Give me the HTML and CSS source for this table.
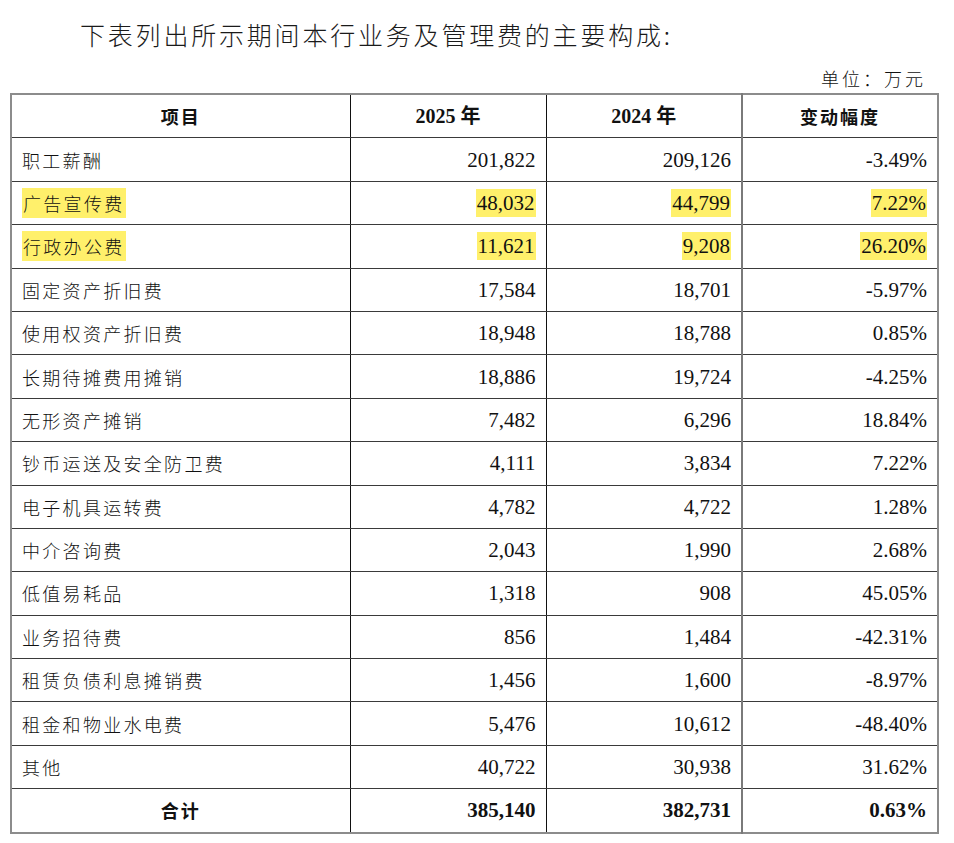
FILE: index.html
```html
<!DOCTYPE html>
<html lang="zh-CN">
<head>
<meta charset="utf-8">
<title>业务及管理费</title>
<link rel="stylesheet" href="styles.css">
</head>
<body>
<p class="title">下表列出所示期间本行业务及管理费的主要构成:</p>
<p class="unit">单位：万元</p>
<table class="fee">
  <colgroup>
    <col class="c1"><col class="c2"><col class="c3"><col class="c4">
  </colgroup>
  <thead>
    <tr><th>项目</th><th>2025 年</th><th class="gray">2024 年</th><th>变动幅度</th></tr>
  </thead>
  <tbody>
    <tr><td class="lbl">职工薪酬</td><td>201,822</td><td class="gray">209,126</td><td>-3.49%</td></tr>
    <tr><td class="lbl"><span class="hl">广告宣传费</span></td><td><span class="hl">48,032</span></td><td class="gray"><span class="hl">44,799</span></td><td><span class="hl">7.22%</span></td></tr>
    <tr><td class="lbl"><span class="hl">行政办公费</span></td><td><span class="hl">11,621</span></td><td class="gray"><span class="hl">9,208</span></td><td><span class="hl">26.20%</span></td></tr>
    <tr><td class="lbl">固定资产折旧费</td><td>17,584</td><td class="gray">18,701</td><td>-5.97%</td></tr>
    <tr><td class="lbl">使用权资产折旧费</td><td>18,948</td><td class="gray">18,788</td><td>0.85%</td></tr>
    <tr><td class="lbl">长期待摊费用摊销</td><td>18,886</td><td class="gray">19,724</td><td>-4.25%</td></tr>
    <tr><td class="lbl">无形资产摊销</td><td>7,482</td><td class="gray">6,296</td><td>18.84%</td></tr>
    <tr><td class="lbl">钞币运送及安全防卫费</td><td>4,111</td><td class="gray">3,834</td><td>7.22%</td></tr>
    <tr><td class="lbl">电子机具运转费</td><td>4,782</td><td class="gray">4,722</td><td>1.28%</td></tr>
    <tr><td class="lbl">中介咨询费</td><td>2,043</td><td class="gray">1,990</td><td>2.68%</td></tr>
    <tr><td class="lbl">低值易耗品</td><td>1,318</td><td class="gray">908</td><td>45.05%</td></tr>
    <tr><td class="lbl">业务招待费</td><td>856</td><td class="gray">1,484</td><td>-42.31%</td></tr>
    <tr><td class="lbl">租赁负债利息摊销费</td><td>1,456</td><td class="gray">1,600</td><td>-8.97%</td></tr>
    <tr><td class="lbl">租金和物业水电费</td><td>5,476</td><td class="gray">10,612</td><td>-48.40%</td></tr>
    <tr><td class="lbl">其他</td><td>40,722</td><td class="gray">30,938</td><td>31.62%</td></tr>
  </tbody>
  <tfoot>
    <tr><td class="total-lbl">合计</td><td>385,140</td><td class="gray">382,731</td><td>0.63%</td></tr>
  </tfoot>
</table>
</body>
</html>
```

FILE: styles.css
```css
html, body {
  margin: 0;
  padding: 0;
  background: #ffffff;
  color: #111111;
}

body {
  font-family: "Liberation Serif", "Noto Sans CJK SC", serif;
}

.title {
  margin: 0;
  padding: 16px 0 0 80px;
  font-family: "Noto Sans CJK SC", sans-serif;
  font-size: 25px;
  line-height: 36px;
  letter-spacing: 2.8px;
  font-weight: 300;
  color: #1a1a1a;
}

.unit {
  margin: 16px 0 0 0;
  padding-right: 28px;
  text-align: right;
  font-family: "Noto Sans CJK SC", sans-serif;
  font-size: 18px;
  line-height: 20px;
  letter-spacing: 3px;
  font-weight: 300;
}

.fee {
  margin: 5px 0 0 10px;
  width: 927px;
  table-layout: fixed;
  border-collapse: collapse;
  border: 2px solid #8c8c8c;
}

.c1 { width: 339px; }
.c2 { width: 196px; }
.c3 { width: 196px; }
.c4 { width: 196px; }

.fee th,
.fee td {
  height: 42.4px;
  padding: 0 10px;
  border-top: 1px solid #3a3a3a;
  border-bottom: 1px solid #3a3a3a;
  border-left: 1px solid #111111;
  border-right: 1px solid #111111;
  font-size: 21px;
  line-height: 24px;
  vertical-align: middle;
  text-align: right;
  white-space: nowrap;
}

.fee td.gray,
.fee th.gray {
  border-right: 2px solid #7a7a7a;
}

.fee th {
  text-align: center;
  font-weight: bold;
  font-size: 20px;
}

.fee th:first-child,
.fee th:last-child {
  font-family: "Noto Sans CJK SC", sans-serif;
  font-size: 18px;
  letter-spacing: 2px;
}

.fee td.lbl {
  text-align: left;
  padding-left: 10px;
  font-family: "Noto Sans CJK SC", sans-serif;
  font-size: 18px;
  letter-spacing: 2.3px;
  font-weight: 300;
}

.fee tfoot td {
  font-weight: bold;
}

.fee td.total-lbl {
  text-align: center;
  font-family: "Noto Sans CJK SC", sans-serif;
  font-size: 18px;
  letter-spacing: 2px;
}

.hl {
  background: #fff06b;
  padding: 2px 1px;
}
```
